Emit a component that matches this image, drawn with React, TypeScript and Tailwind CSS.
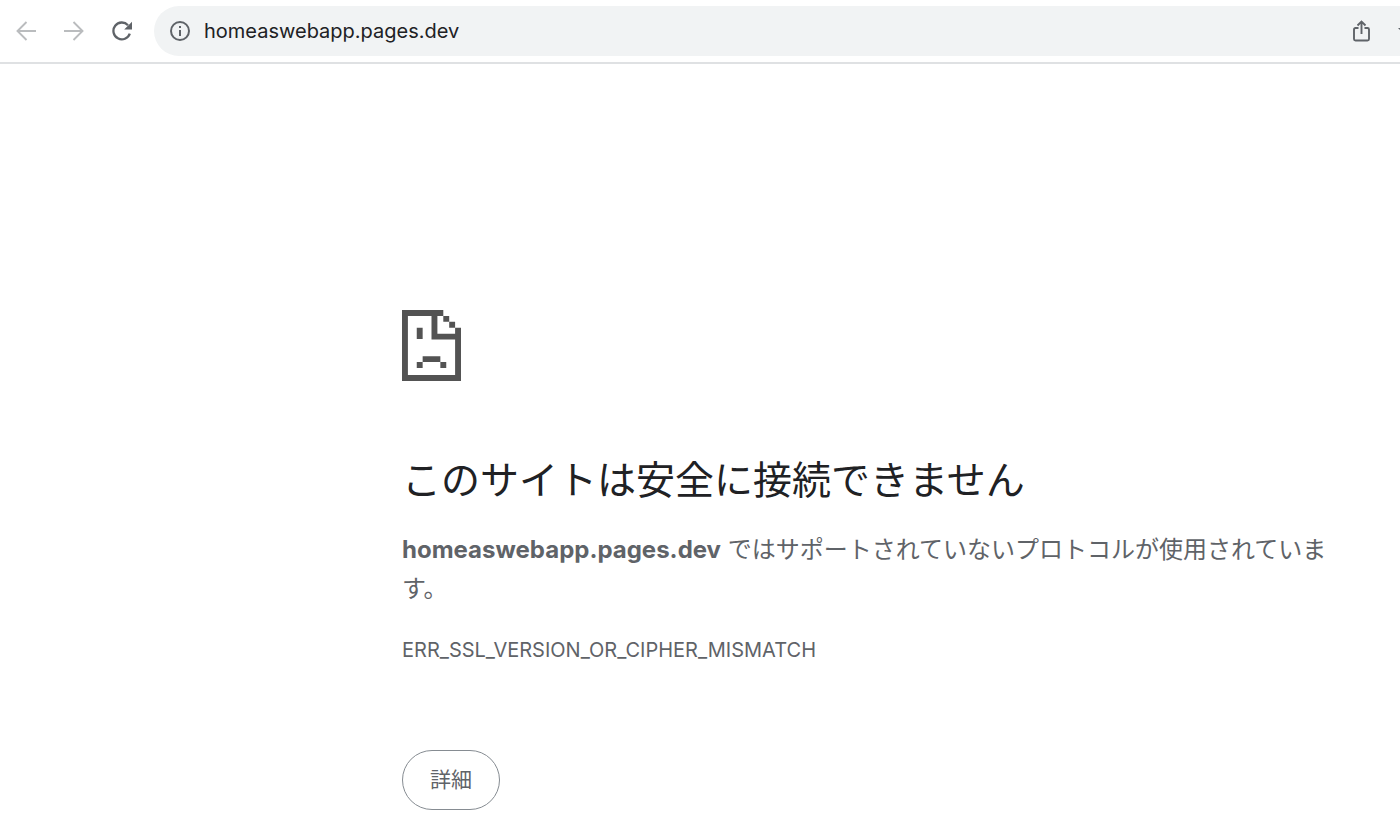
import React from "react";

const HOST = "homeaswebapp.pages.dev";

const BackIcon = () => (
  <svg width="20" height="20" viewBox="0 0 20 20" fill="none" stroke="currentColor" strokeWidth="1.9">
    <path d="M20 10H2M10.500 1 1.500 10l9 9" />
  </svg>
);

const ForwardIcon = () => (
  <svg width="20" height="20" viewBox="0 0 20 20" fill="none" stroke="currentColor" strokeWidth="1.9">
    <path d="M0 10h18M9.500 1l9 9-9 9" />
  </svg>
);

const ReloadIcon = () => (
  <svg width="20" height="20" viewBox="0 0 20 20" fill="none">
    <path d="M17.800 12.600A8.400 8.400 0 1 1 16 4.200" stroke="currentColor" strokeWidth="2.3" />
    <path d="M20 .8V8.600h-7.800z" fill="currentColor" />
  </svg>
);

const InfoIcon = () => (
  <svg width="20" height="20" viewBox="0 0 20 20" fill="none">
    <circle cx="10" cy="10" r="9" stroke="currentColor" strokeWidth="2" />
    <path d="M9 9h2v6H9zM9 5h2v2H9z" fill="currentColor" />
  </svg>
);

const ShareIcon = () => (
  <svg width="17" height="22" viewBox="0 0 17 22" fill="none" stroke="currentColor" strokeWidth="1.9">
    <path d="M5.500 8H2.500Q1 8 1 9.500V19Q1 20.500 2.500 20.500h12q1.500 0 1.500-1.500V9.500Q16 8 14.500 8h-3" />
    <path d="M8.500 14V1.500M4.500 5.500l4-4 4 4" />
  </svg>
);

// pixel art, drawn on a 10 x 12 grid
const SadPageIcon = () => (
  <svg width="59" height="71" viewBox="0 0 10 12" preserveAspectRatio="none" fill="currentColor">
    <path d="M0 0h7v1h1v1h1v1h1v9H0zM1 1v10h8V5H5V1zM6 1v3h3V3H8V2H7V1z" fillRule="evenodd" />
    <path d="M2.500 3h1v1.900h-1zM3.500 7.800h3v1h-3zM2.500 8.800h1v1h-1zM6.500 8.800h1v1h-1z" />
  </svg>
);

const Toolbar = () => {
  return (
    <header className="flex h-16 items-center border-b-2 border-[#dfe1e3] pb-px pl-4">
      <nav className="flex items-center gap-7 text-[#5f6368]">
        <button type="button" aria-label="戻る" disabled className="text-[#babcbe]">
          <BackIcon />
        </button>
        <button type="button" aria-label="進む" disabled className="text-[#babcbe]">
          <ForwardIcon />
        </button>
        <button type="button" aria-label="再読み込み">
          <ReloadIcon />
        </button>
      </nav>
      <div className="ml-[22px] flex h-[50px] min-w-0 flex-1 items-center overflow-hidden rounded-l-full bg-[#f1f3f4] pl-4 text-[#5f6368]">
        <button type="button" aria-label="サイト情報">
          <InfoIcon />
        </button>
        <input
          type="text"
          aria-label="アドレス"
          defaultValue={HOST}
          className="ml-3.5 min-w-0 flex-1 bg-transparent text-xl text-[#202124] outline-none"
        />
        <button type="button" aria-label="共有">
          <ShareIcon />
        </button>
        {/* tip of the bookmark star, cut off by the window edge */}
        <svg className="ml-7 shrink-0" width="2" height="20" viewBox="0 0 2 20">
          <path d="M0 7h2v2z" fill="#5f6368" />
        </svg>
      </div>
    </header>
  );
};

const App = () => {
  return (
    <div className="min-h-screen bg-white font-['Inter','Noto_Sans_CJK_JP',sans-serif]">
      <Toolbar />
      <main className="ml-[402px] mr-[66px] pt-[246px] text-[#5f6368]">
        <div className="text-[#535353]">
          <SadPageIcon />
        </div>
        <h1 className="mt-[75px] text-[39px] leading-[48px] text-[#202124]">
          このサイトは安全に接続できません
        </h1>
        <p className="mt-[26px] text-2xl leading-[39px]">
          <strong className="font-bold">{HOST}</strong>{" "}
          ではサポートされていないプロトコルが使用されています。
        </p>
        <p className="mt-[26px] text-xl leading-8">ERR_SSL_VERSION_OR_CIPHER_MISMATCH</p>
        <button
          type="button"
          className="mt-[84px] h-[60px] rounded-full border border-[#868c92] px-[27px] text-[21px]"
        >
          詳細
        </button>
      </main>
    </div>
  );
};

export default App;
